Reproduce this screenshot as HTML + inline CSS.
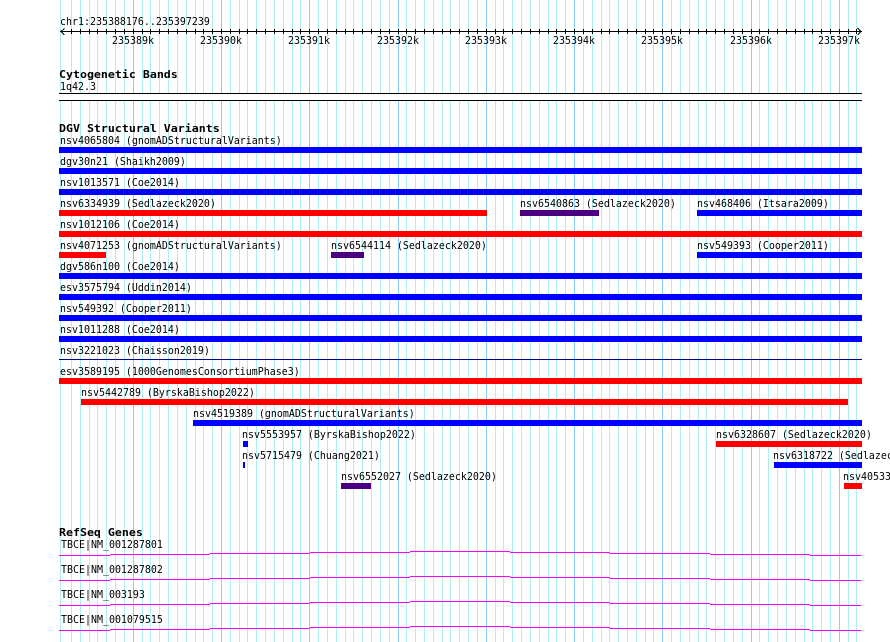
<!DOCTYPE html>
<html><head><meta charset="utf-8"><style>
html,body{margin:0;padding:0;background:#fff;width:890px;height:642px;overflow:hidden}
svg{display:block}
text{font-family:"DejaVu Sans Mono","Liberation Mono",monospace;font-size:11px;fill:#000}
.b{font-weight:bold}
</style></head><body>
<svg width="890" height="642" viewBox="0 0 890 642" xmlns="http://www.w3.org/2000/svg">
<g shape-rendering="crispEdges">
<path stroke="#aeeeee" fill="none" d="M60.5 0V642M71.5 0V642M80.5 0V642M89.5 0V642M97.5 0V642M106.5 0V642M115.5 0V642M124.5 0V642M142.5 0V642M150.5 0V642M159.5 0V642M168.5 0V642M177.5 0V642M186.5 0V642M195.5 0V642M203.5 0V642M212.5 0V642M230.5 0V642M239.5 0V642M247.5 0V642M256.5 0V642M265.5 0V642M274.5 0V642M283.5 0V642M292.5 0V642M300.5 0V642M318.5 0V642M327.5 0V642M336.5 0V642M345.5 0V642M353.5 0V642M362.5 0V642M371.5 0V642M380.5 0V642M389.5 0V642M406.5 0V642M415.5 0V642M424.5 0V642M433.5 0V642M442.5 0V642M450.5 0V642M459.5 0V642M468.5 0V642M477.5 0V642M495.5 0V642M503.5 0V642M512.5 0V642M521.5 0V642M530.5 0V642M539.5 0V642M548.5 0V642M556.5 0V642M565.5 0V642M583.5 0V642M592.5 0V642M601.5 0V642M609.5 0V642M618.5 0V642M627.5 0V642M636.5 0V642M645.5 0V642M653.5 0V642M671.5 0V642M680.5 0V642M689.5 0V642M698.5 0V642M706.5 0V642M715.5 0V642M724.5 0V642M733.5 0V642M742.5 0V642M759.5 0V642M768.5 0V642M777.5 0V642M786.5 0V642M795.5 0V642M804.5 0V642M812.5 0V642M821.5 0V642M830.5 0V642M848.5 0V642M856.5 0V642"/>
<path stroke="#87cefa" fill="none" d="M133.5 0V642M221.5 0V642M309.5 0V642M398.5 0V642M486.5 0V642M574.5 0V642M662.5 0V642M751.5 0V642M839.5 0V642"/>
<rect x="59" y="93" width="803" height="8" fill="#fff"/>
<rect x="59" y="93" width="803" height="1" fill="#000"/>
<rect x="59" y="100" width="803" height="1" fill="#000"/>
<rect x="60" y="31" width="802" height="1" fill="#000"/>
<path stroke="#000" fill="none" d="M71.5 29V34M80.5 29V34M89.5 29V34M97.5 29V34M106.5 29V34M115.5 29V34M124.5 29V34M133.5 29V34M142.5 29V34M150.5 29V34M159.5 29V34M168.5 29V34M177.5 29V34M186.5 29V34M195.5 29V34M203.5 29V34M212.5 29V34M221.5 29V34M230.5 29V34M239.5 29V34M247.5 29V34M256.5 29V34M265.5 29V34M274.5 29V34M283.5 29V34M292.5 29V34M300.5 29V34M309.5 29V34M318.5 29V34M327.5 29V34M336.5 29V34M345.5 29V34M353.5 29V34M362.5 29V34M371.5 29V34M380.5 29V34M389.5 29V34M398.5 29V34M406.5 29V34M415.5 29V34M424.5 29V34M433.5 29V34M442.5 29V34M450.5 29V34M459.5 29V34M468.5 29V34M477.5 29V34M486.5 29V34M495.5 29V34M503.5 29V34M512.5 29V34M521.5 29V34M530.5 29V34M539.5 29V34M548.5 29V34M556.5 29V34M565.5 29V34M574.5 29V34M583.5 29V34M592.5 29V34M601.5 29V34M609.5 29V34M618.5 29V34M627.5 29V34M636.5 29V34M645.5 29V34M653.5 29V34M662.5 29V34M671.5 29V34M680.5 29V34M689.5 29V34M698.5 29V34M706.5 29V34M715.5 29V34M724.5 29V34M733.5 29V34M742.5 29V34M751.5 29V34M759.5 29V34M768.5 29V34M777.5 29V34M786.5 29V34M795.5 29V34M804.5 29V34M812.5 29V34M821.5 29V34M830.5 29V34M839.5 29V34M848.5 29V34M856.5 29V34"/>
<path stroke="#000" fill="none" d="M64.5 28.5L61 31.5L64.5 35M857.5 28L861 31.5L857.5 35"/>
<g fill="#0000ff">
<rect x="59" y="147" width="803" height="6"/><rect x="59" y="168" width="803" height="6"/><rect x="59" y="189" width="803" height="6"/>
<rect x="697" y="210" width="165" height="6"/><rect x="697" y="252" width="165" height="6"/>
<rect x="59" y="273" width="803" height="6"/><rect x="59" y="294" width="803" height="6"/><rect x="59" y="315" width="803" height="6"/><rect x="59" y="336" width="803" height="6"/>
<rect x="193" y="420" width="669" height="6"/><rect x="243" y="441" width="5" height="6"/><rect x="243" y="462" width="2" height="6"/><rect x="774" y="462" width="88" height="6"/>
</g>
<rect x="59" y="359" width="803" height="1" fill="#00008b"/>
<g fill="#ff0000">
<rect x="59" y="210" width="428" height="6"/><rect x="59" y="231" width="803" height="6"/><rect x="59" y="252" width="47" height="6"/>
<rect x="59" y="378" width="803" height="6"/><rect x="81" y="399" width="767" height="6"/><rect x="716" y="441" width="146" height="6"/><rect x="844" y="483" width="18" height="6"/>
</g>
<g fill="#4b0082">
<rect x="520" y="210" width="79" height="6"/><rect x="331" y="252" width="33" height="6"/><rect x="341" y="483" width="30" height="6"/>
</g>
<g fill="#ff00ff">
<path d="M59 555H110V556H59ZM110 554H210V555H110ZM210 553H310V554H210ZM310 552H410V553H310ZM410 551H510V552H410ZM510 552H610V553H510ZM610 553H710V554H610ZM710 554H810V555H710ZM810 555H861V556H810Z"/>
<path d="M59 580H110V581H59ZM110 579H210V580H110ZM210 578H310V579H210ZM310 577H410V578H310ZM410 576H510V577H410ZM510 577H610V578H510ZM610 578H710V579H610ZM710 579H810V580H710ZM810 580H861V581H810Z"/>
<path d="M59 605H110V606H59ZM110 604H210V605H110ZM210 603H310V604H210ZM310 602H410V603H310ZM410 601H510V602H410ZM510 602H610V603H510ZM610 603H710V604H610ZM710 604H810V605H710ZM810 605H861V606H810Z"/>
<path d="M59 630H110V631H59ZM110 629H210V630H110ZM210 628H310V629H210ZM310 627H410V628H310ZM410 626H510V627H410ZM510 627H610V628H510ZM610 628H710V629H610ZM710 629H810V630H710ZM810 630H861V631H810Z"/>
</g>
</g>
<text transform="matrix(.906 0 0 1 60 25)">chr1:235388176..235397239</text>
<text transform="matrix(.906 0 0 1 112 44)">235389k</text><text transform="matrix(.906 0 0 1 200 44)">235390k</text><text transform="matrix(.906 0 0 1 288 44)">235391k</text><text transform="matrix(.906 0 0 1 377 44)">235392k</text><text transform="matrix(.906 0 0 1 465 44)">235393k</text><text transform="matrix(.906 0 0 1 553 44)">235394k</text><text transform="matrix(.906 0 0 1 641 44)">235395k</text><text transform="matrix(.906 0 0 1 730 44)">235396k</text><text transform="matrix(.906 0 0 1 818 44)">235397k</text>
<text class="b" transform="matrix(1.057 0 0 1 59 78)">Cytogenetic Bands</text>
<text transform="matrix(.906 0 0 1 60 90)">1q42.3</text>
<text class="b" transform="matrix(1.057 0 0 1 59 132)">DGV Structural Variants</text>
<text transform="matrix(.906 0 0 1 60 144)">nsv4065804 (gnomADStructuralVariants)</text>
<text transform="matrix(.906 0 0 1 60 165)">dgv30n21 (Shaikh2009)</text>
<text transform="matrix(.906 0 0 1 60 186)">nsv1013571 (Coe2014)</text>
<text transform="matrix(.906 0 0 1 60 207)">nsv6334939 (Sedlazeck2020)</text>
<text transform="matrix(.906 0 0 1 520 207)">nsv6540863 (Sedlazeck2020)</text>
<text transform="matrix(.906 0 0 1 697 207)">nsv468406 (Itsara2009)</text>
<text transform="matrix(.906 0 0 1 60 228)">nsv1012106 (Coe2014)</text>
<text transform="matrix(.906 0 0 1 60 249)">nsv4071253 (gnomADStructuralVariants)</text>
<text transform="matrix(.906 0 0 1 331 249)">nsv6544114 (Sedlazeck2020)</text>
<text transform="matrix(.906 0 0 1 697 249)">nsv549393 (Cooper2011)</text>
<text transform="matrix(.906 0 0 1 60 270)">dgv586n100 (Coe2014)</text>
<text transform="matrix(.906 0 0 1 60 291)">esv3575794 (Uddin2014)</text>
<text transform="matrix(.906 0 0 1 60 312)">nsv549392 (Cooper2011)</text>
<text transform="matrix(.906 0 0 1 60 333)">nsv1011288 (Coe2014)</text>
<text transform="matrix(.906 0 0 1 60 354)">nsv3221023 (Chaisson2019)</text>
<text transform="matrix(.906 0 0 1 60 375)">esv3589195 (1000GenomesConsortiumPhase3)</text>
<text transform="matrix(.906 0 0 1 81 396)">nsv5442789 (ByrskaBishop2022)</text>
<text transform="matrix(.906 0 0 1 193 417)">nsv4519389 (gnomADStructuralVariants)</text>
<text transform="matrix(.906 0 0 1 242 438)">nsv5553957 (ByrskaBishop2022)</text>
<text transform="matrix(.906 0 0 1 716 438)">nsv6328607 (Sedlazeck2020)</text>
<text transform="matrix(.906 0 0 1 242 459)">nsv5715479 (Chuang2021)</text>
<text transform="matrix(.906 0 0 1 773 459)">nsv6318722 (Sedlazeck2020)</text>
<text transform="matrix(.906 0 0 1 341 480)">nsv6552027 (Sedlazeck2020)</text>
<text transform="matrix(.906 0 0 1 843 480)">nsv4053300 (Sedlazeck2020)</text>
<text class="b" transform="matrix(1.057 0 0 1 59 536)">RefSeq Genes</text>
<text transform="matrix(.906 0 0 1 61 548)">TBCE|NM_001287801</text>
<text transform="matrix(.906 0 0 1 61 573)">TBCE|NM_001287802</text>
<text transform="matrix(.906 0 0 1 61 598)">TBCE|NM_003193</text>
<text transform="matrix(.906 0 0 1 61 623)">TBCE|NM_001079515</text>
</svg>
</body></html>
